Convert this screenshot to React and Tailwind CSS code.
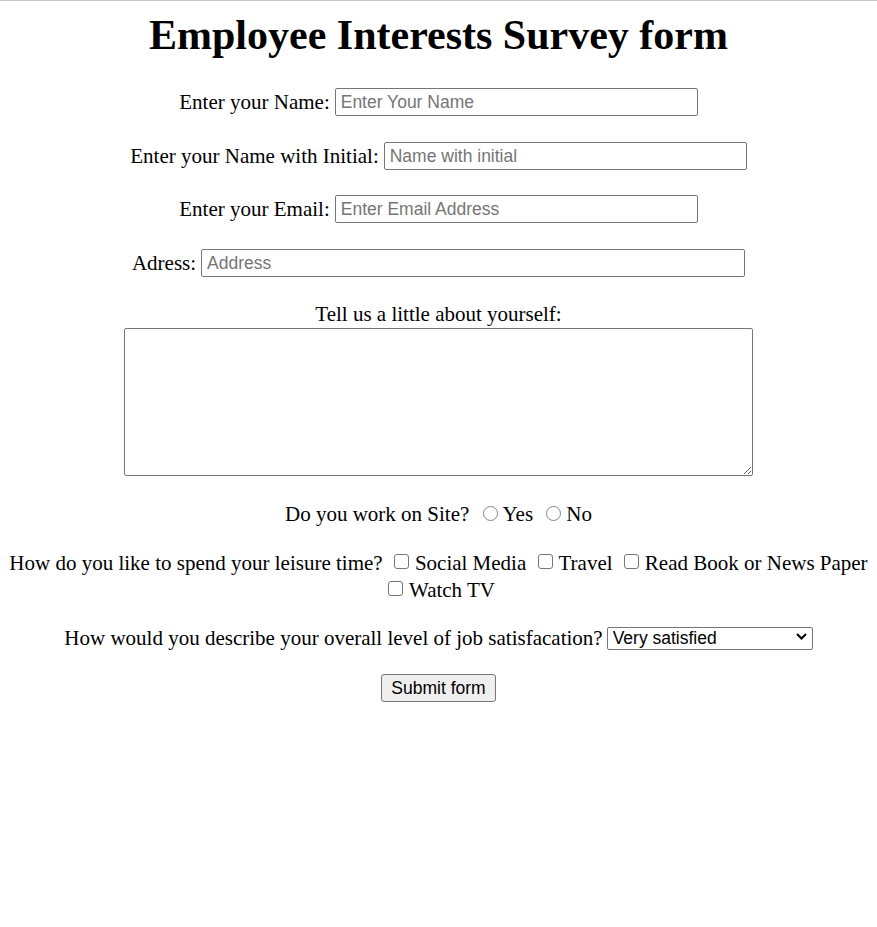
import React from "react";

const Radio = () => (
  <span className="inline-block w-[15px] h-[15px] rounded-full border-[1.5px] border-[#858585] bg-white ml-[8px] mr-[5px]" />
);

const Check = () => (
  <span className="inline-block w-[15px] h-[15px] rounded-[3px] border-[1.5px] border-[#767676] bg-white ml-[6px] mr-[6px] mb-[1px]" />
);

const inputCls =
  "h-[28px] border border-[#767676] rounded-[2px] px-[5px] bg-white text-[17.5px] font-['Liberation_Sans',Arial,sans-serif] placeholder:text-[#757575] outline-none";

export default function App() {
  return (
    <div className="min-h-[927px] bg-white border-t border-[#c4c4c4] text-black text-[21px] leading-[24px] font-['Liberation_Serif','Times_New_Roman',serif]">
      <h1 className="pt-[10px] text-center text-[42px] leading-[48px] font-bold">
        Employee Interests Survey form
      </h1>

      <form className="flex flex-col items-center">
        <div className="mt-[29px] flex items-center gap-[5px]">
          <label>Enter your Name:</label>
          <input className={`${inputCls} w-[363px]`} placeholder="Enter Your Name" />
        </div>

        <div className="mt-[26px] flex items-center gap-[5px]">
          <label>Enter your Name with Initial:</label>
          <input className={`${inputCls} w-[363px]`} placeholder="Name with initial" />
        </div>

        <div className="mt-[25px] flex items-center gap-[5px]">
          <label>Enter your Email:</label>
          <input className={`${inputCls} w-[363px]`} placeholder="Enter Email Address" />
        </div>

        <div className="mt-[26px] flex items-center gap-[5px]">
          <label>Adress:</label>
          <input className={`${inputCls} w-[544px]`} placeholder="Address" />
        </div>

        <div className="mt-[25px]">Tell us a little about yourself:</div>
        <textarea className="mt-[2px] w-[629px] h-[148px] border border-[#767676] rounded-[2px] bg-white outline-none" />

        <div className="mt-[26px] text-center">
          Do you work on Site? <Radio />Yes <Radio />No
        </div>

        <div className="mt-[24px] leading-[27px] text-center">
          <div>
            How do you like to spend your leisure time? <Check />Social Media <Check />Travel <Check />Read Book or News Paper
          </div>
          <div>
            <Check />Watch TV
          </div>
        </div>

        <div className="mt-[21px] flex items-center gap-[4px]">
          <label>How would you describe your overall level of job satisfacation?</label>
          <div className="relative">
            <select className="appearance-none w-[206px] h-[23px] border border-[#767676] rounded-[2px] bg-white pl-[5px] text-[17.5px] leading-[21px] font-['Liberation_Sans',Arial,sans-serif] outline-none">
              <option>Very satisfied</option>
              <option>Satisfied</option>
              <option>Neutral</option>
              <option>Unsatisfied</option>
              <option>Very unsatisfied</option>
            </select>
            <svg
              className="absolute right-[6px] top-[8px] pointer-events-none"
              width="11"
              height="7"
              viewBox="0 0 11 7"
              fill="none"
              stroke="#000"
              strokeWidth="2"
            >
              <polyline points="1,1 5.5,5.5 10,1" />
            </svg>
          </div>
        </div>

        <button
          type="button"
          className="mt-[24px] w-[115px] h-[28px] border border-[#767676] rounded-[3px] bg-[#efefef] text-[17.5px] font-['Liberation_Sans',Arial,sans-serif]"
        >
          Submit form
        </button>
      </form>
    </div>
  );
}
